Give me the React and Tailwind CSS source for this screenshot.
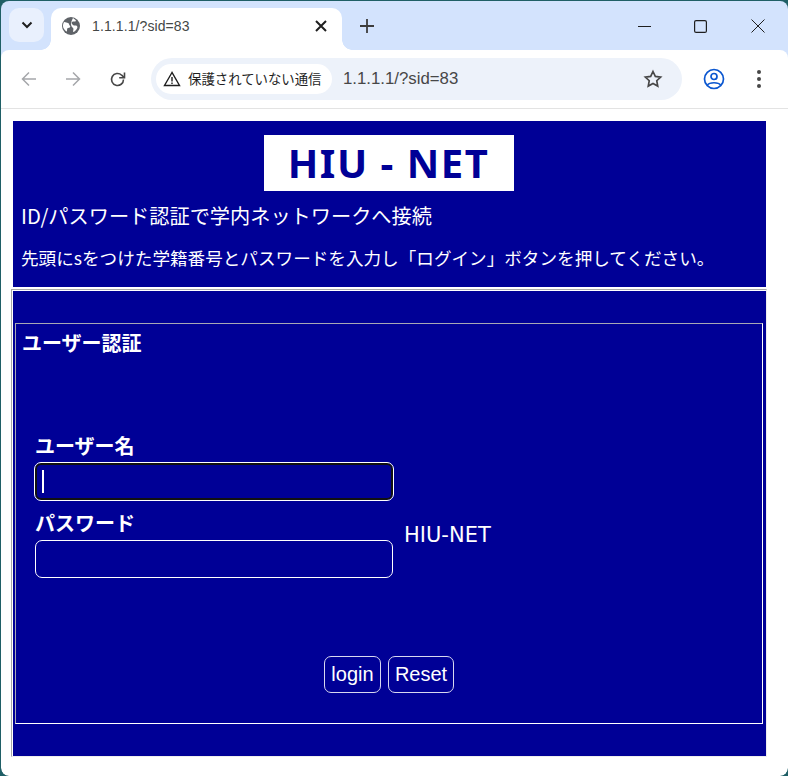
import React from 'react';

const jp = "font-['Noto_Sans_CJK_JP','Noto_Sans',sans-serif]";
const latin = "font-['DejaVu_Sans','Noto_Sans_CJK_JP',sans-serif]";

function Chrome() {
  return (
    <div className="shrink-0 bg-[#d3e3fd]">
      {/* tab strip */}
      <div className="h-[49px] flex items-start">
        <div className="ml-[8px] mt-[7px] w-[35px] h-[34px] rounded-[10px] bg-[#e9f0fd] flex items-center justify-center">
          <svg width="12" height="8" viewBox="0 0 12 8" fill="none" stroke="#1f1f1f" strokeWidth="2"><path d="M1.500 1.500 6 6l4.500-4.500" /></svg>
        </div>
        <div className="relative ml-[7px] mt-[7px] w-[291px] h-[42px] bg-white rounded-t-[10px] flex items-center pl-[11px] pb-[6px]">
          <span className="absolute -left-[10px] bottom-0 w-[10px] h-[10px] bg-[radial-gradient(circle_at_0_0,transparent_9.5px,white_10px)]" />
          <span className="absolute -right-[10px] bottom-0 w-[10px] h-[10px] bg-[radial-gradient(circle_at_100%_0,transparent_9.5px,white_10px)]" />
          <svg width="18" height="18" viewBox="0 0 18 18" className="shrink-0">
            <circle cx="9" cy="9" r="9" fill="#5f6368" />
            <path d="M2 5c2 0 3 1 4 1s1 2 2 3-1 2-2 2-1 2-1 3.500C3 14 1 11 1 9c0-2 .5-3 1-4ZM11 1c1 1 3 2 3 3-1 1-3 0-4 1s0 2 1 3 3 0 4 1 0 3-1 4-2 2-3 2c0-2 1-3 0-4s-2-2-2-4 1-4 2-6Z" fill="#fff" />
          </svg>
          <span className="ml-[12px] text-[14px] tracking-[0.1px] text-[#444746] font-['Liberation_Sans',sans-serif] leading-none">1.1.1.1/?sid=83</span>
          <svg width="12" height="12" viewBox="0 0 12 12" className="ml-auto mr-[15px]" stroke="#1f1f1f" strokeWidth="2"><path d="M1 1l10 10M11 1 1 11" /></svg>
        </div>
        <div className="ml-[18px] mt-[18px]">
          <svg width="14" height="14" viewBox="0 0 14 14" stroke="#3c3c3c" strokeWidth="1.800"><path d="M7 0v14M0 7h14" /></svg>
        </div>
        <div className="ml-auto flex items-center mt-[18px]">
          <svg width="13" height="13" viewBox="0 0 13 13" stroke="#1f1f1f" strokeWidth="1"><path d="M0 6.500h13" /></svg>
          <svg width="13" height="13" viewBox="0 0 13 13" fill="none" stroke="#1f1f1f" strokeWidth="1.200" className="ml-[43px]"><rect x=".6" y=".6" width="11.800" height="11.800" rx="1.500" /></svg>
          <svg width="14" height="14" viewBox="0 0 14 14" stroke="#1f1f1f" strokeWidth="1" className="ml-[44px] mr-[23px]"><path d="M.5.500l13 13M13.500.500l-13 13" /></svg>
        </div>
      </div>
      {/* toolbar */}
      <div className="h-[59px] bg-white border-b border-[#e3e3e3] flex items-center rounded-t-[8px]">
        <svg width="16" height="16" viewBox="0 0 16 16" fill="none" stroke="#a5a7aa" strokeWidth="1.500" className="ml-[20px]"><path d="M15 8H1.500M8 1.500 1.500 8 8 14.500" /></svg>
        <svg width="16" height="16" viewBox="0 0 16 16" fill="none" stroke="#a5a7aa" strokeWidth="1.500" className="ml-[28px]"><path d="M1 8h13.500M8 1.500 14.500 8 8 14.500" /></svg>
        <svg width="17" height="17" viewBox="0 0 17 17" fill="none" stroke="#474747" strokeWidth="1.600" className="ml-[28px]">
          <path d="M14.500 8.500a6 6 0 1 1-1.800-4.300L15 6.300" />
          <path d="M15.500 1.500v5.300h-5.300" fill="none" />
        </svg>
        <div className="ml-[25px] w-[531px] h-[42px] rounded-full bg-[#edf2fa] flex items-center pl-[5px]">
          <div className="h-[30px] w-[176px] rounded-full bg-white flex items-center pl-[7px]">
            <svg width="18" height="16" viewBox="0 0 18 16" fill="none" stroke="#1f1f1f" strokeWidth="1.400"><path d="M9 1.500 1.500 14.500h15Z" /><path d="M9 6v4.500M9 11.500v1.500" /></svg>
            <span className={`ml-[7px] text-[13.400px] text-[#1f1f1f] leading-none whitespace-nowrap ${jp}`}>保護されていない通信</span>
          </div>
          <span className="ml-[11px] text-[16.800px] text-[#474747] font-['Liberation_Sans',sans-serif] leading-none">1.1.1.1/?sid=83</span>
          <svg width="20" height="20" viewBox="0 0 24 24" fill="none" stroke="#474747" strokeWidth="2" className="ml-auto mr-[19px]"><path d="m12 3 2.800 5.900 6.400.8-4.700 4.400 1.200 6.400-5.700-3.100-5.700 3.100 1.200-6.400-4.700-4.400 6.400-.8Z" /></svg>
        </div>
        <svg width="22" height="22" viewBox="0 0 22 22" fill="none" stroke="#0b57d0" strokeWidth="1.700" className="ml-[21px]">
          <circle cx="11" cy="11" r="9.500" />
          <circle cx="11" cy="8.500" r="3" />
          <path d="M4.500 17c2-3 11-3 13 0" />
        </svg>
        <div className="ml-[32px] flex flex-col gap-[3px]">
          <span className="w-[4px] h-[4px] rounded-full bg-[#474747]" />
          <span className="w-[4px] h-[4px] rounded-full bg-[#474747]" />
          <span className="w-[4px] h-[4px] rounded-full bg-[#474747]" />
        </div>
      </div>
    </div>
  );
}

function Page() {
  return (
    <div className="flex-1 bg-white rounded-b-[8px] pt-[12px] pl-[10px] text-white">
      {/* header */}
      <div className="ml-[2px] w-[753px] h-[166px] bg-[#000096] pl-[8px] pt-[14px]">
        <div className="flex justify-center -ml-[10px]">
          <h1 className="w-[250px] h-[56px] bg-white text-[#000096] text-[40px] tracking-[1.500px] font-bold flex items-center justify-center leading-none font-['Noto_Sans',sans-serif]">HIU - NET</h1>
        </div>
        <p className={`mt-[12px] text-[20.200px] leading-[26px] ${jp}`}>ID/パスワード認証で学内ネットワークへ接続</p>
        <p className={`mt-[16px] text-[17.600px] leading-[26px] whitespace-nowrap ${jp}`}>先頭にsをつけた学籍番号とパスワードを入力し「ログイン」ボタンを押してください。</p>
      </div>
      {/* form panel */}
      <div className="mt-[2px] w-[756px] h-[468px] border border-t-[#a8a8a8] border-l-[#a8a8a8] border-r-[#eeeeee] border-b-[#eeeeee]">
        <div className="h-full border-t border-l border-white bg-[#000096] pt-[32px] pl-[2px]">
          <div className="w-[748px] h-[401px] border border-t-[#a8a8b4] border-l-[#a8a8b4] border-r-white border-b-white pl-[6px] pt-[6px] flex flex-col">
            <h2 className={`text-[20px] font-bold leading-[26px] ${jp}`}>ユーザー認証</h2>
            <div className="mt-[76px] pl-[13px] flex items-end">
              <div className="w-[360px]">
                <label className={`block text-[20px] font-bold leading-[28px] mb-[2px] ${jp}`}>ユーザー名</label>
                <div className="w-[360px] h-[39px] rounded-[7px] border border-white ring-2 ring-inset ring-[#111111] flex items-center pl-[7px] -ml-[1px]">
                  <span className="w-[2px] h-[23px] bg-white" />
                </div>
                <label className={`block mt-[8px] text-[20px] font-bold leading-[28px] ${jp}`}>パスワード</label>
                <input type="password" className="block mt-[3px] w-[358px] h-[38px] rounded-[7px] border border-white bg-transparent" />
              </div>
              <span className={`ml-[9px] mb-[29px] text-[21px] leading-[28px] ${latin}`}>HIU-NET</span>
            </div>
            <div className="mt-[78px] flex justify-center gap-[7px] pr-[6px]">
              <button className="h-[37px] w-[57px] rounded-[7px] border border-[#d8d8f0] pb-[1px] text-[20px] font-['Liberation_Sans',sans-serif]">login</button>
              <button className="h-[37px] w-[66px] rounded-[7px] border border-[#d8d8f0] pb-[1px] text-[20px] font-['Liberation_Sans',sans-serif]">Reset</button>
            </div>
          </div>
        </div>
      </div>
    </div>
  );
}

export default function App() {
  return (
    <div className="w-[788px] h-[776px] bg-[#1f5f66] overflow-hidden">
      <div className="w-[787px] h-[775px] ml-[1px] mt-[1px] flex flex-col rounded-[8px] overflow-hidden">
        <Chrome />
        <Page />
      </div>
    </div>
  );
}
